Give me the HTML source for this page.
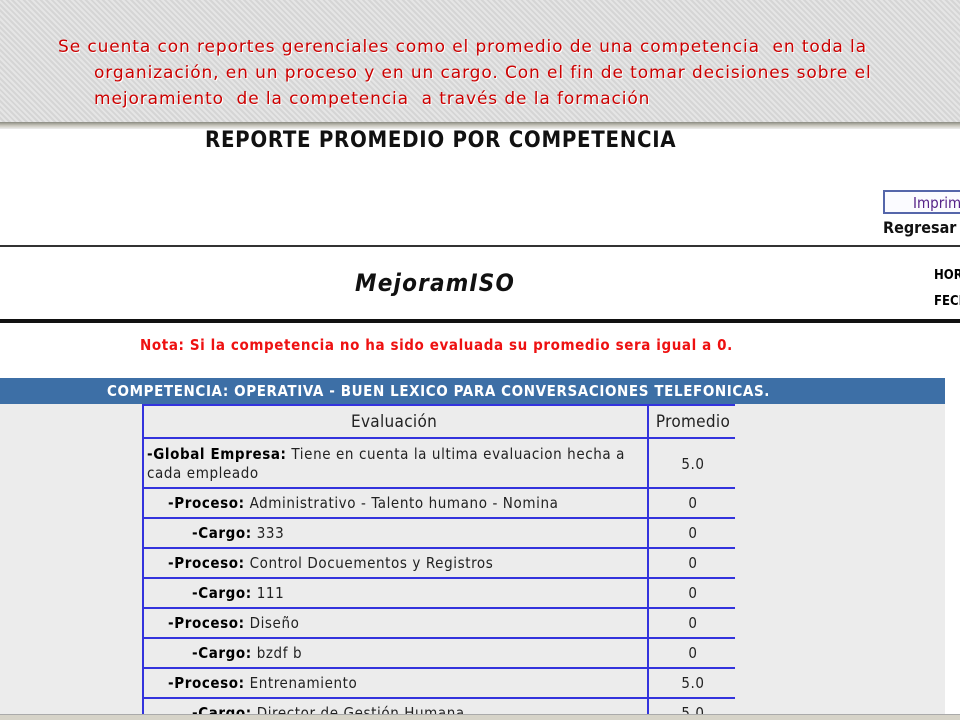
<!DOCTYPE html>
<html><head><meta charset="utf-8"><style>
*{margin:0;padding:0;box-sizing:border-box}
html{overflow:hidden;height:720px}
body{width:960px;height:720px;position:relative;overflow:hidden;background:#fff;font-family:"DejaVu Sans Condensed","Liberation Sans",sans-serif}
.a{position:absolute;white-space:nowrap}
#top{left:0;top:0;width:960px;height:122px;background:#dcdcdc;background-image:repeating-linear-gradient(45deg,rgba(255,255,255,.25) 0 2px,rgba(0,0,0,.03) 2px 4px)}
.red{color:#cc0000;font-family:"DejaVu Sans",sans-serif;font-size:17px;letter-spacing:0.9px;text-shadow:1px 1px 0 #fff}
.row{position:absolute;left:142px;width:593px;height:30px;border-top:2px solid #3333dd;border-left:2px solid #3333dd;font-size:15px;color:#222;letter-spacing:0.6px}
.row .l{position:absolute;top:5px}
.row .r{position:absolute;left:503px;top:0;bottom:0;width:90px;border-left:2px solid #3333dd;text-align:center;padding-top:5px}
b{color:#000}
</style></head><body>
<div id="top" class="a"></div>
<div class="a red" style="left:58px;top:37px">Se cuenta con reportes gerenciales como el promedio de una competencia &nbsp;en toda la</div>
<div class="a red" style="left:94px;top:63px">organización, en un proceso y en un cargo. Con el fin de tomar decisiones sobre el</div>
<div class="a red" style="left:94px;top:89px">mejoramiento &nbsp;de la competencia &nbsp;a través de la formación</div>
<div class="a" style="left:0;top:122px;width:960px;height:7px;background:linear-gradient(#8a8a80,#c8c6bc,#eee)"></div>
<div class="a" style="left:205px;top:128px;font-size:22px;font-weight:bold;color:#111;letter-spacing:0.7px">REPORTE PROMEDIO POR COMPETENCIA</div>
<div class="a" style="left:883px;top:190px;width:90px;height:24px;border:2px solid #5566aa;background:#fbfbff;font-size:15px;color:#552288;padding:2px 0 0 28px">Imprimir</div>
<div class="a" style="left:883px;top:218px;font-size:16px;font-weight:bold;color:#111">Regresar</div>
<div class="a" style="left:0;top:245px;width:960px;height:2px;background:#333"></div>
<div class="a" style="left:355px;top:269px;font-size:24px;font-weight:bold;font-style:italic;color:#111;letter-spacing:1.2px">MejoramISO</div>
<div class="a" style="left:934px;top:268px;font-size:13px;font-weight:bold">HORA</div>
<div class="a" style="left:934px;top:294px;font-size:13px;font-weight:bold">FECHA</div>
<div class="a" style="left:0;top:319px;width:960px;height:4px;background:#111"></div>
<div class="a" style="left:140px;top:336px;font-size:15px;font-weight:bold;color:#ee1111;letter-spacing:0.6px">Nota: Si la competencia no ha sido evaluada su promedio sera igual a 0.</div>
<div class="a" style="left:0;top:378px;width:945px;height:26px;background:#3d6fa6;color:#fff;font-size:15px;font-weight:bold;padding:4px 0 0 107px;letter-spacing:0.6px">COMPETENCIA: OPERATIVA - BUEN LEXICO PARA CONVERSACIONES TELEFONICAS.</div>
<div class="a" style="left:0;top:404px;width:945px;height:311px;background:#ececec"></div>
<div class="row" style="top:404px;height:34px;font-size:17px;letter-spacing:0.3px"><div class="l" style="left:207px;top:6px">Evaluación</div><div class="r" style="padding-top:6px;font-size:17px">Promedio</div></div>
<div class="row" style="top:437px;height:51px"><div class="l" style="left:3px;top:6px;line-height:19px;white-space:normal;width:490px"><b>-Global Empresa:</b> Tiene en cuenta la ultima evaluacion hecha a cada empleado</div><div class="r" style="padding-top:16px">5.0</div></div>
<div class="row" style="top:487px"><div class="l" style="left:24px"><b>-Proceso:</b> Administrativo - Talento humano - Nomina</div><div class="r">0</div></div>
<div class="row" style="top:517px"><div class="l" style="left:48px"><b>-Cargo:</b> 333</div><div class="r">0</div></div>
<div class="row" style="top:547px"><div class="l" style="left:24px"><b>-Proceso:</b> Control Docuementos y Registros</div><div class="r">0</div></div>
<div class="row" style="top:577px"><div class="l" style="left:48px"><b>-Cargo:</b> 111</div><div class="r">0</div></div>
<div class="row" style="top:607px"><div class="l" style="left:24px"><b>-Proceso:</b> Diseño</div><div class="r">0</div></div>
<div class="row" style="top:637px"><div class="l" style="left:48px"><b>-Cargo:</b> bzdf b</div><div class="r">0</div></div>
<div class="row" style="top:667px"><div class="l" style="left:24px"><b>-Proceso:</b> Entrenamiento</div><div class="r">5.0</div></div>
<div class="row" style="top:697px;height:18px"><div class="l" style="left:48px"><b>-Cargo:</b> Director de Gestión Humana</div><div class="r">5.0</div></div>
<div class="a" style="left:0;top:714px;width:960px;height:6px;background:#d6d3c8;border-top:1px solid #aaa;z-index:5"></div>
</body></html>
